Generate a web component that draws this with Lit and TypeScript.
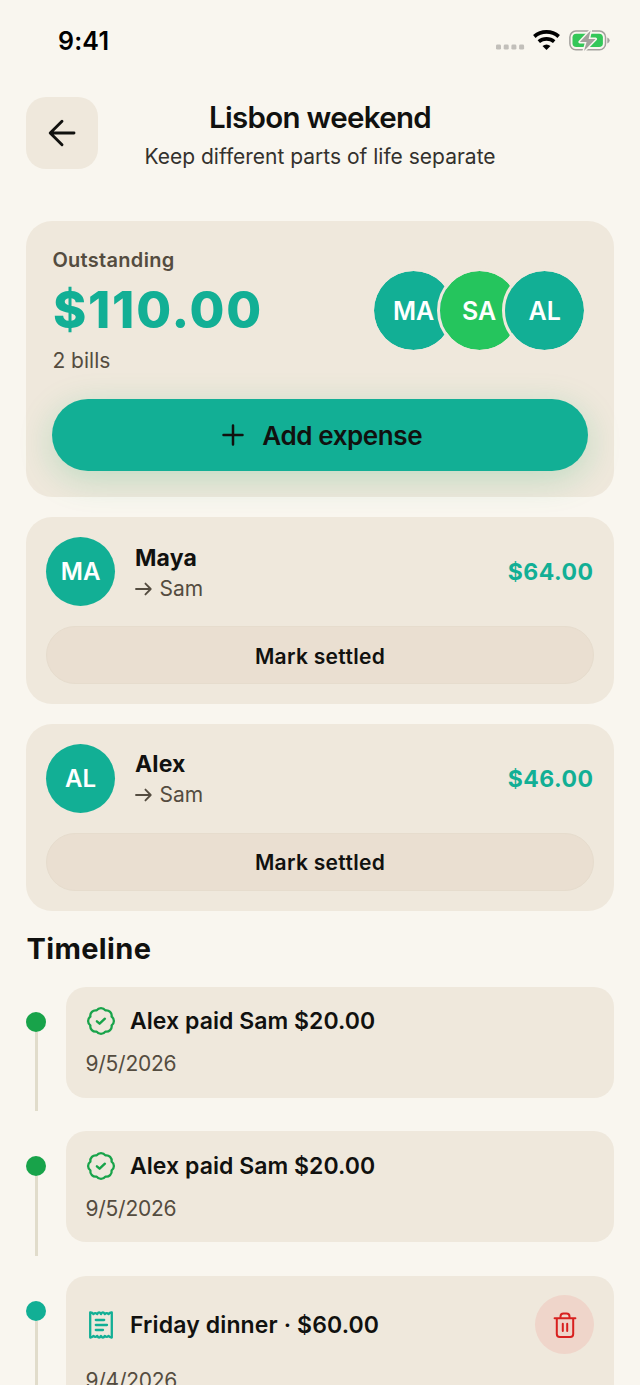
import { LitElement, html, svg, css } from "lit";
import { customElement, property } from "lit/decorators.js";

interface Debt {
  initials: string;
  name: string;
  to: string;
  amount: string;
}

interface Entry {
  kind: "paid" | "bill";
  title: string;
  date: string;
}

const debts: Debt[] = [
  { initials: "MA", name: "Maya", to: "Sam", amount: "$64.00" },
  { initials: "AL", name: "Alex", to: "Sam", amount: "$46.00" },
];

const entries: Entry[] = [
  { kind: "paid", title: "Alex paid Sam $20.00", date: "9/5/2026" },
  { kind: "paid", title: "Alex paid Sam $20.00", date: "9/5/2026" },
  { kind: "bill", title: "Friday dinner · $60.00", date: "9/4/2026" },
];

// Scalloped outline: eight shallow lobes around a circle.
const badgePath = (() => {
  const n = 8;
  const r = 11.5;
  const pts = Array.from({ length: n }, (_, i) => {
    const a = ((i + 0.5) / n) * Math.PI * 2;
    return [15 + r * Math.cos(a), 15 + r * Math.sin(a)].map((v) => v.toFixed(2));
  });
  return (
    `M${pts[n - 1].join(" ")}` +
    pts.map((p) => `A5.4 5.4 0 0 1 ${p.join(" ")}`).join("") +
    "Z"
  );
})();

const glyphs = {
  back: svg`<path d="M27 15H3.5M15 3.3L3.2 15l11.8 11.7" stroke-width="2.9"/>`,
  plus: svg`<path d="M15 5.5v19M5.5 15h19" stroke-width="2.5"/>`,
  arrow: svg`<path d="M5 15h18M16.8 8.2l6.6 6.8-6.6 6.8" stroke-width="2.3"/>`,
  paid: svg`<path d=${badgePath} stroke-width="2.3"/><path d="M10.9 15.3l2.7 2.4 5.3-5" stroke-width="2.4"/>`,
  bill: svg`<path d="M4.2 2.5v25q1.9.2 3.2-1.6 1.9 1.9 3.8 0 1.9 3.4 3.8 0 1.9 3.4 3.8 0 1.9 1.9 3.8 0 1.3 1.8 3.2 1.6v-25q-1.9-.2-3.2 1.6-1.9-1.9-3.8 0-1.9-3.4-3.8 0-1.9-3.4-3.8 0-1.9-1.9-3.8 0-1.3-1.8-3.2-1.6Z" stroke-width="2.3"/><path d="M9.8 10h8.4M9.8 15h11.2M9.8 20h7.2" stroke-width="2.3"/>`,
  trash: svg`<path d="M4.6 8.2h20.8M6.8 8.2v15.7q0 3 3 3h10.4q3 0 3-3V8.2M10.5 8.2V6.6q0-3 3-3h3q3 0 3 3v1.6M12.8 13.8v7.2M17.2 13.8v7.2" stroke-width="2"/>`,
};

@customElement("ui-icon")
class UiIcon extends LitElement {
  @property() name: keyof typeof glyphs = "back";
  static styles = css`
    :host { display: block; width: 30px; height: 30px; flex: none; }
    svg {
      display: block; width: 100%; height: 100%; fill: none;
      stroke: currentColor; stroke-linecap: round; stroke-linejoin: round;
    }
  `;
  render() {
    return html`<svg viewBox="0 0 30 30">${glyphs[this.name]}</svg>`;
  }
}

@customElement("status-bar")
class StatusBar extends LitElement {
  static styles = css`
    :host {
      display: flex; justify-content: space-between; align-items: flex-start;
      height: 97px; padding: 26px 29px 0 58px; box-sizing: border-box;
    }
    .time { font-size: 25px; line-height: 30px; font-weight: 600; color: #000; letter-spacing: 0.2px; }
    svg { display: block; width: 116px; height: 30px; }
  `;
  render() {
    return html`
      <span class="time">9:41</span>
      <svg viewBox="0 0 116 30">
        <g fill="#c2bfba">
          <rect x="1" y="18.6" width="5" height="5" rx="1.4" />
          <rect x="8.7" y="18.6" width="5" height="5" rx="1.4" />
          <rect x="16.4" y="18.6" width="5" height="5" rx="1.4" />
          <rect x="24.1" y="18.6" width="5" height="5" rx="1.4" />
        </g>
        <g fill="none" stroke="#000" stroke-width="3.7">
          <path d="M39.3 10.5a18.5 18.5 0 0 1 24.4 0" />
          <path d="M43.8 15.7a12 12 0 0 1 15.4 0" />
        </g>
        <path d="M47.5 20a6.6 6.6 0 0 1 8 0L51.5 24z" fill="#000" />
        <rect x="74.9" y="5.1" width="35.6" height="18.6" rx="6" fill="none" stroke="#a3a19d" stroke-width="1.5" />
        <path d="M112.3 11.4v6q2.4-.8 2.4-3t-2.4-3z" fill="#a3a19d" />
        <rect x="77.5" y="7.7" width="30.4" height="13.4" rx="3.8" fill="#34c759" />
        <path d="M95.6 4.4L84.8 16h6.8L89 25l11.6-12h-7z" fill="#a3a19d" stroke="#f9f6ef" stroke-width="3" paint-order="stroke" stroke-linejoin="round" />
      </svg>
    `;
  }
}

@customElement("debt-card")
class DebtCard extends LitElement {
  @property({ attribute: false }) debt!: Debt;
  static styles = css`
    :host {
      display: flex; flex-direction: column; gap: 20px; box-sizing: border-box;
      height: 186.7px; padding: 19.7px; border-radius: 26px; background: #efe8dc;
    }
    .row { display: flex; align-items: center; height: 69px; }
    .avatar {
      display: grid; place-items: center; width: 69px; height: 69px; margin-right: 20px;
      border-radius: 50%; background: #12af95; color: #fff;
      font-size: 24px; font-weight: 600; letter-spacing: 0.1px;
    }
    .who { display: grid; gap: 3px; flex: 1; padding-top: 3px; }
    .name { font-size: 23px; line-height: 28px; font-weight: 700; color: #11110f; letter-spacing: 0.1px; }
    .to { display: flex; align-items: center; font-size: 21px; line-height: 28px; color: #544c40; }
    .to ui-icon { width: 24px; height: 24px; margin: 0 3.5px 0 -3px; }
    .amount {
      font-size: 23px; font-weight: 750; color: #12af95; letter-spacing: 0.5px;
      padding-top: 1px; margin-right: 0.3px;
    }
    .settle {
      height: 59px; border: 1px solid #e6dccd; border-radius: 30px; background: #eadfd1;
      font: 600 21px Inter, sans-serif; color: #11110f; padding: 2px 0 0; letter-spacing: 0.3px;
    }
  `;
  render() {
    const d = this.debt;
    return html`
      <div class="row">
        <span class="avatar">${d.initials}</span>
        <div class="who">
          <span class="name">${d.name}</span>
          <span class="to"><ui-icon name="arrow"></ui-icon>${d.to}</span>
        </div>
        <span class="amount">${d.amount}</span>
      </div>
      <button class="settle">Mark settled</button>
    `;
  }
}

@customElement("timeline-entry")
class TimelineEntry extends LitElement {
  @property({ attribute: false }) entry!: Entry;
  static styles = css`
    :host { display: block; }
    .wrap { display: flex; gap: 19.5px; }
    .rail { display: flex; flex-direction: column; align-items: center; width: 20px; padding-top: 25.2px; }
    .dot { width: 20px; height: 20px; border-radius: 50%; background: #18a34a; }
    .bill .dot { background: #12af95; }
    .line { flex: 1; width: 3px; background: #e1dccb; }
    .card {
      flex: 1; height: 111px; margin-bottom: 13.3px; padding: 19px 20px; border-radius: 20px;
      background: #efe8dc; box-sizing: border-box;
    }
    .bill .card { height: 134px; }
    .head { display: flex; align-items: center; gap: 14.5px; height: 31px; color: #18a34a; }
    .bill .head { height: 60px; color: #12af95; }
    .title { flex: 1; font-size: 23px; font-weight: 620; color: #11110f; letter-spacing: 0.05px; }
    .bill .title { letter-spacing: 0.13px; }
    .date { margin-top: 12.4px; font-size: 21px; line-height: 30px; color: #544c40; letter-spacing: -0.25px; }
    .bill .date { margin-top: 11.6px; }
    .remove {
      display: grid; place-items: center; width: 59px; height: 59px; padding: 0;
      border: 0; border-radius: 50%; background: #efd5ca; color: #d8201f;
    }
  `;
  render() {
    const e = this.entry;
    return html`
      <div class="wrap ${e.kind}">
        <div class="rail"><span class="dot"></span><span class="line"></span></div>
        <div class="card">
          <div class="head">
            <ui-icon name=${e.kind}></ui-icon>
            <span class="title">${e.title}</span>
            ${e.kind === "bill"
              ? html`<button class="remove"><ui-icon name="trash"></ui-icon></button>`
              : null}
          </div>
          <div class="date">${e.date}</div>
        </div>
      </div>
    `;
  }
}

@customElement("app-root")
class AppRoot extends LitElement {
  static styles = css`
    :host {
      display: block; width: 640px; height: 1385px; overflow: hidden;
      background: #f9f6ef; font-family: Inter, sans-serif; color: #11110f;
    }
    .header {
      display: grid; grid-template: 72px / 72px 1fr 72px; height: 72px; margin: 0 26px;
    }
    .back {
      display: grid; place-items: center; padding: 0; border: 0; border-radius: 20px;
      background: #efe8dc; color: #11110f;
    }
    .titles { display: flex; flex-direction: column; align-items: center; white-space: nowrap; }
    h1 { margin: 1px 0 0; font-size: 29.5px; line-height: 38px; font-weight: 600; letter-spacing: -0.7px; }
    .sub { font-size: 21px; line-height: 28px; margin-top: 6.5px; color: #33312d; letter-spacing: 0; }
    .main { display: flex; flex-direction: column; gap: 20px; margin: 52.4px 26.4px 0; }
    .summary {
      height: 276px; padding: 25px 26px 0; border-radius: 26px;
      background: #efe8dc; box-sizing: border-box;
    }
    .top { display: flex; justify-content: space-between; height: 153px; }
    .label { font-size: 20px; line-height: 26px; margin-top: 1px; font-weight: 600; color: #544c40; letter-spacing: 0.3px; }
    .total {
      font-size: 50.5px; line-height: 60px; margin: 7px 0 0 0.5px; font-weight: 800;
      color: #12af95; letter-spacing: 1.8px;
    }
    .count { font-size: 21px; line-height: 26px; margin-top: 8px; color: #544c40; }
    .people { display: flex; padding: 21.7px 0 0; margin-right: 0.4px; }
    .avatar {
      display: grid; place-items: center; width: 79px; height: 79px; margin-left: -19.4px;
      border: 3px solid #efe8dc; border-radius: 50%; background: #12af95; background-clip: padding-box; color: #fff;
      font-size: 25px; font-weight: 600;
    }
    .avatar.green { background-color: #25c55d; }
    .add {
      display: flex; align-items: center; justify-content: center; gap: 14.5px; width: 100%; height: 72px;
      padding: 0; border: 0; border-radius: 36px; background: #12af95; color: #11110f;
      font: 600 26px Inter, sans-serif; letter-spacing: -0.4px;
      box-shadow: 0 8px 34px rgba(18, 175, 100, 0.22);
    }
    h2 { margin: 20px 26.5px 0; font-size: 29px; line-height: 36px; font-weight: 700; letter-spacing: 0.35px; }
    .timeline { display: flex; flex-direction: column; gap: 20px; margin: 20.2px 26px 0; }
  `;
  render() {
    return html`
      <status-bar></status-bar>
      <header class="header">
        <button class="back"><ui-icon name="back"></ui-icon></button>
        <div class="titles">
          <h1>Lisbon weekend</h1>
          <span class="sub">Keep different parts of life separate</span>
        </div>
      </header>
      <div class="main">
        <section class="summary">
          <div class="top">
            <div>
              <div class="label">Outstanding</div>
              <div class="total">$110.00</div>
              <div class="count">2 bills</div>
            </div>
            <div class="people">
              <span class="avatar">MA</span>
              <span class="avatar green">SA</span>
              <span class="avatar">AL</span>
            </div>
          </div>
          <button class="add"><ui-icon name="plus"></ui-icon>Add expense</button>
        </section>
        ${debts.map((d) => html`<debt-card .debt=${d}></debt-card>`)}
      </div>
      <h2>Timeline</h2>
      <div class="timeline">
        ${entries.map((e) => html`<timeline-entry .entry=${e}></timeline-entry>`)}
      </div>
    `;
  }
}
